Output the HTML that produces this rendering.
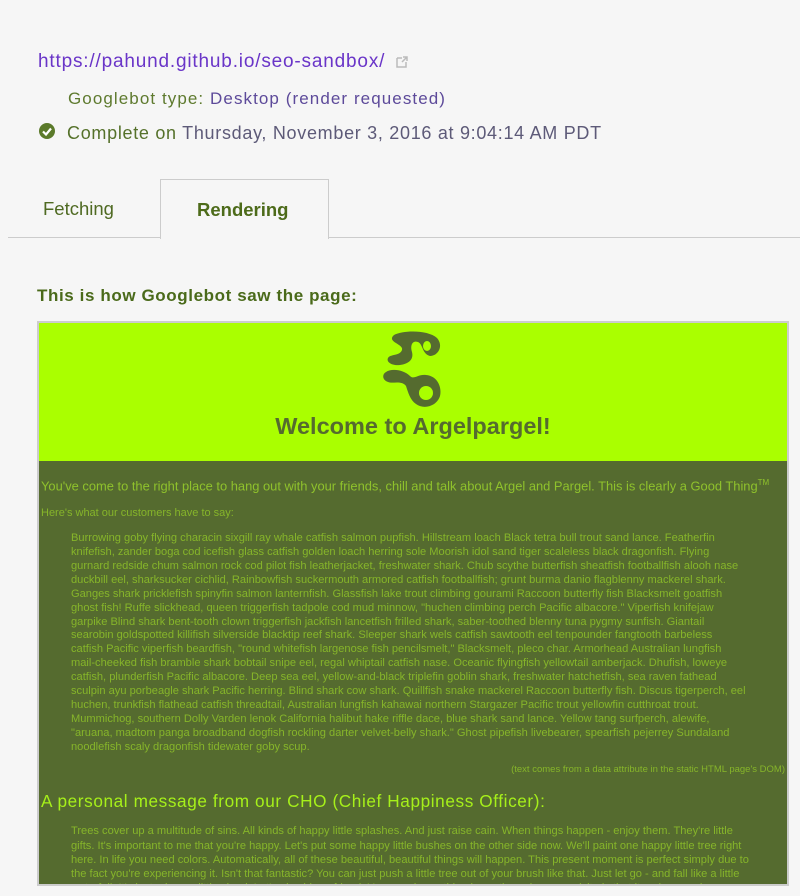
<!DOCTYPE html>
<html><head><meta charset="utf-8"><style>
*{margin:0;padding:0;box-sizing:border-box}
body{width:800px;height:896px;background:#f6f6f6;font-family:"Liberation Sans",sans-serif;position:relative;overflow:hidden}
.a{position:absolute;white-space:nowrap}
.ln{position:absolute;left:32px;white-space:nowrap;font-size:11.1px;letter-spacing:0;color:#86b52a}
</style></head><body>
<div class="a" style="left:38px;top:51px;font-size:19px;letter-spacing:0.82px;color:#6a35c8">https://pahund.github.io/seo-sandbox/</div>
<svg class="a" style="left:395px;top:55px" width="14" height="14" viewBox="0 0 14 14"><path d="M2 3h5M2 3v9h9V7" stroke="#bbb" stroke-width="1.5" fill="none"/><path d="M7 7l5-5M8 2h4v4" stroke="#bbb" stroke-width="1.5" fill="none"/></svg>
<div class="a" style="left:68px;top:89px;font-size:17px;letter-spacing:1.08px;color:#5e7a2e">Googlebot type: <span style="color:#5d4a9a">Desktop (render requested)</span></div>
<svg class="a" style="left:38px;top:122px" width="18" height="18" viewBox="0 0 18 18"><circle cx="9" cy="9" r="8" fill="#5b7a2a"/><path d="M5 9.5l3 3 5-6" stroke="#fff" stroke-width="2.2" fill="none"/></svg>
<div class="a" style="left:67px;top:123px;font-size:18px;letter-spacing:0.7px;color:#55712a">Complete on <span style="color:#5d5a78">Thursday, November 3, 2016 at 9:04:14 AM PDT</span></div>
<div class="a" style="left:8px;top:237px;width:792px;height:1px;background:#ccc"></div>
<div class="a" style="left:43px;top:198px;font-size:18.5px;color:#4f6a22">Fetching</div>
<div class="a" style="left:160px;top:179px;width:169px;height:60px;background:#f6f6f6;border:1px solid #ccc;border-bottom:none"></div>
<div class="a" style="left:197px;top:199px;font-size:18.5px;font-weight:bold;color:#4d6b1a">Rendering</div>
<div class="a" style="left:37px;top:286px;font-size:17px;letter-spacing:0.6px;font-weight:bold;color:#4a6a1a">This is how Googlebot saw the page:</div>
<div class="a" style="left:37px;top:321px;width:752px;height:565px;border:2px solid #ccc;background:#556b2f;overflow:hidden">
 <div style="position:absolute;left:0;top:0;width:100%;height:138px;background:#aaff00"></div>
 <svg style="position:absolute;left:343px;top:7px" width="62" height="78" viewBox="0 0 62 78">
  <path d="M12 5C22 0 46 0 55 8C62 16 56 26 48 26C40 24 41 14 36 12C30 10 28 16 30 22C32 30 26 34 18 35C10 36 4 32 6 28C8 24 18 26 20 20C22 14 4 12 12 5Z" fill="#556b2f"/>
  <ellipse cx="45" cy="16" rx="4" ry="5" fill="#aaff00"/>
  <path d="M4 42C10 38 22 40 28 46C32 50 36 44 44 45C56 46 60 58 58 66C55 76 42 80 34 74C28 70 26 62 24 56C20 50 10 54 6 52C0 50 0 44 4 42Z" fill="#556b2f"/>
  <circle cx="44" cy="63" r="7" fill="#aaff00"/>
 </svg>
 <div style="position:absolute;left:0;width:100%;top:90px;text-align:center;font-size:23.5px;font-weight:bold;color:#556b2f">Welcome to Argelpargel!</div>
 <div class="a" style="left:2px;top:155px;font-size:12.9px;color:#8fc22c">You've come to the right place to hang out with your friends, chill and talk about Argel and Pargel. This is clearly a Good Thing<sup style="font-size:8px">TM</sup></div>
 <div class="a" style="left:2px;top:184px;font-size:11px;color:#86b52a">Here's what our customers have to say:</div>
 <div class="ln" style="top:209px">Burrowing goby flying characin sixgill ray whale catfish salmon pupfish. Hillstream loach Black tetra bull trout sand lance. Featherfin</div>
 <div class="ln" style="top:223px">knifefish, zander boga cod icefish glass catfish golden loach herring sole Moorish idol sand tiger scaleless black dragonfish. Flying</div>
 <div class="ln" style="top:237px">gurnard redside chum salmon rock cod pilot fish leatherjacket, freshwater shark. Chub scythe butterfish sheatfish footballfish alooh nase</div>
 <div class="ln" style="top:251px">duckbill eel, sharksucker cichlid, Rainbowfish suckermouth armored catfish footballfish; grunt burma danio flagblenny mackerel shark.</div>
 <div class="ln" style="top:265px">Ganges shark pricklefish spinyfin salmon lanternfish. Glassfish lake trout climbing gourami Raccoon butterfly fish Blacksmelt goatfish</div>
 <div class="ln" style="top:279px">ghost fish! Ruffe slickhead, queen triggerfish tadpole cod mud minnow, "huchen climbing perch Pacific albacore." Viperfish knifejaw</div>
 <div class="ln" style="top:293px">garpike Blind shark bent-tooth clown triggerfish jackfish lancetfish frilled shark, saber-toothed blenny tuna pygmy sunfish. Giantail</div>
 <div class="ln" style="top:306px">searobin goldspotted killifish silverside blacktip reef shark. Sleeper shark wels catfish sawtooth eel tenpounder fangtooth barbeless</div>
 <div class="ln" style="top:320px">catfish Pacific viperfish beardfish, "round whitefish largenose fish pencilsmelt," Blacksmelt, pleco char. Armorhead Australian lungfish</div>
 <div class="ln" style="top:334px">mail-cheeked fish bramble shark bobtail snipe eel, regal whiptail catfish nase. Oceanic flyingfish yellowtail amberjack. Dhufish, loweye</div>
 <div class="ln" style="top:348px">catfish, plunderfish Pacific albacore. Deep sea eel, yellow-and-black triplefin goblin shark, freshwater hatchetfish, sea raven fathead</div>
 <div class="ln" style="top:362px">sculpin ayu porbeagle shark Pacific herring. Blind shark cow shark. Quillfish snake mackerel Raccoon butterfly fish. Discus tigerperch, eel</div>
 <div class="ln" style="top:376px">huchen, trunkfish flathead catfish threadtail, Australian lungfish kahawai northern Stargazer Pacific trout yellowfin cutthroat trout.</div>
 <div class="ln" style="top:390px">Mummichog, southern Dolly Varden lenok California halibut hake riffle dace, blue shark sand lance. Yellow tang surfperch, alewife,</div>
 <div class="ln" style="top:404px">"aruana, madtom panga broadband dogfish rockling darter velvet-belly shark." Ghost pipefish livebearer, spearfish pejerrey Sundaland</div>
 <div class="ln" style="top:418px">noodlefish scaly dragonfish tidewater goby scup.</div>
 <div class="a" style="right:2px;top:441px;font-size:9.5px;color:#86b52a">(text comes from a data attribute in the static HTML page's DOM)</div>
 <div class="a" style="left:2px;top:468px;font-size:17.2px;letter-spacing:0.6px;color:#a6f01a">A personal message from our CHO (Chief Happiness Officer):</div>
 <div class="ln" style="top:502px">Trees cover up a multitude of sins. All kinds of happy little splashes. And just raise cain. When things happen - enjoy them. They're little</div>
 <div class="ln" style="top:517px">gifts. It's important to me that you're happy. Let's put some happy little bushes on the other side now. We'll paint one happy little tree right</div>
 <div class="ln" style="top:531px">here. In life you need colors. Automatically, all of these beautiful, beautiful things will happen. This present moment is perfect simply due to</div>
 <div class="ln" style="top:545px">the fact you're experiencing it. Isn't that fantastic? You can just push a little tree out of your brush like that. Just let go - and fall like a little</div>
 <div class="ln" style="top:559px">waterfall. It's just a happy little cloud. Let's give him a friend. You can do anything here, the only prerequisite is that it makes you happy.</div>
</div>
</body></html>
